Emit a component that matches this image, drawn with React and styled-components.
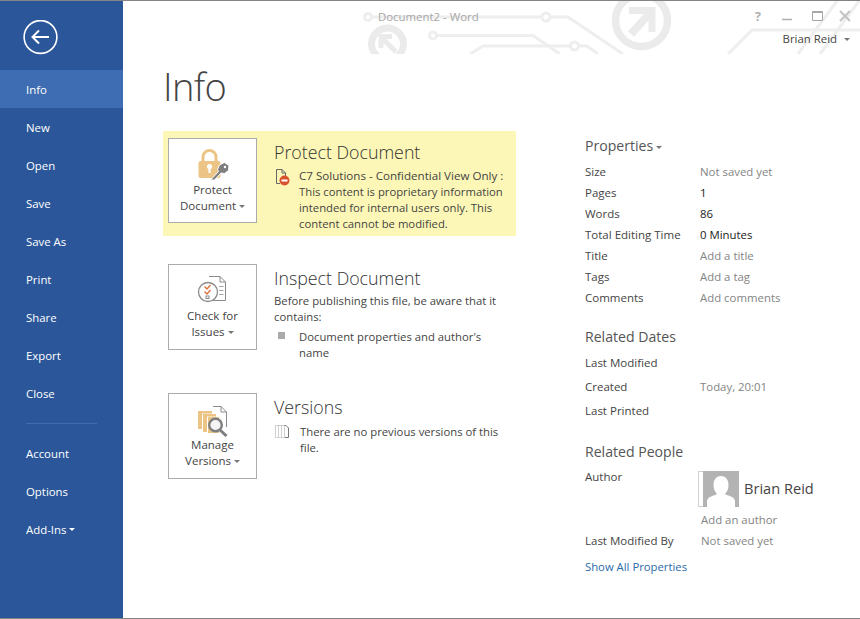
import React from "react";
import styled, { createGlobalStyle } from "styled-components";

const Global = createGlobalStyle`
  html, body { margin: 0; padding: 0; background: #fff; }
  body { font-family: "Open Sans", "Noto Sans", sans-serif; font-size: 11.6px; color: #444; }
  #root { width: 860px; height: 619px; overflow: hidden; }
`;

const Frame = styled.div`
  display: flex;
  width: 860px;
  height: 619px;
  box-sizing: border-box;
  border-top: 1px solid #848484;
  border-bottom: 1px solid #848484;
  background: #fff;
`;

const Sidebar = styled.nav`
  width: 123px;
  flex: none;
  background: #2b579a;
  color: #fff;
  display: flex;
  flex-direction: column;
`;

const BackWrap = styled.div`
  height: 69px;
  padding: 19px 0 0 23px;
  box-sizing: border-box;
`;

const NavItem = styled.div`
  height: 38px;
  display: flex;
  align-items: center;
  padding-left: 26px;
  background: ${(p) => (p.$active ? "#3e6db3" : "transparent")};
  font-size: 11.4px;
`;

const NavRule = styled.div`
  height: 1px;
  width: 71px;
  margin: 11px 0 10px 26px;
  background: #3e6db3;
`;

const Caret = styled.span`
  display: inline-block;
  width: 0;
  height: 0;
  margin-left: ${(p) => p.$gap || 3}px;
  vertical-align: 2px;
  border-left: 3px solid transparent;
  border-right: 3px solid transparent;
  border-top: 3px solid ${(p) => p.$color || "#777"};
`;

const Main = styled.main`
  flex: 1;
  position: relative;
  min-width: 0;
`;

const Deco = styled.svg`
  position: absolute;
  left: 0;
  top: 0;
`;

const TitleBar = styled.header`
  position: relative;
  height: 53px;
  display: flex;
  justify-content: space-between;
`;

const DocTitle = styled.div`
  margin: 8px 0 0 255px;
  color: #a6a6a6;
  font-size: 11.4px;
  line-height: 15px;
`;

const WinArea = styled.div`
  display: flex;
  flex-direction: column;
  align-items: flex-end;
  width: 110px;
`;

const WinControls = styled.svg`
  margin: 7px 8px 0 0;
`;

const UserName = styled.div`
  margin: 7px 10px 0 0;
  font-size: 11.4px;
  line-height: 16px;
  color: #444;
`;

const PageTitle = styled.h1`
  margin: 9px 0 0 40px;
  font-family: "Open Sans", sans-serif;
  font-weight: 300;
  font-size: 38px;
  line-height: 46px;
  color: #444;
  letter-spacing: -0.6px;
`;

const Columns = styled.div`
  display: flex;
  margin-top: 22px;
`;

const LeftCol = styled.div`
  width: 353px;
  margin-left: 40px;
  flex: none;
  display: flex;
  flex-direction: column;
`;

const Section = styled.section`
  display: flex;
  padding: ${(p) => p.$pad || "0 5px"};
  margin-bottom: ${(p) => p.$mb || 0}px;
  background: ${(p) => (p.$warn ? "#fcf7b6" : "transparent")};
`;

const ActionButton = styled.div`
  width: 89px;
  height: ${(p) => p.$h || 86}px;
  flex: none;
  box-sizing: border-box;
  border: 1px solid #ababab;
  background: #fff;
  display: flex;
  flex-direction: column;
  align-items: center;
  text-align: center;
  line-height: 16px;
  font-size: 11.5px;
  color: #444;
`;

const IconSlot = styled.div`
  height: 43px;
  padding-top: ${(p) => p.$top || 9}px;
  box-sizing: border-box;
  flex: none;
`;

const SectionBody = styled.div`
  margin-left: 17px;
  min-width: 0;
  flex: 1;
`;

const SectionTitle = styled.h2`
  margin: 0;
  font-weight: 300;
  font-size: 17.8px;
  line-height: 28px;
  color: #333;
`;

const BodyText = styled.div`
  line-height: 16px;
  color: #444;
  font-size: 11.3px;
  margin-top: 1px;
`;

const IconRow = styled.div`
  display: flex;
  line-height: 16px;
  font-size: 11.3px;
  margin-top: ${(p) => p.$mt || 0}px;
`;

const NoticeLead = styled.span`
  font-size: 11.6px;
`;

const RowIcon = styled.div`
  width: ${(p) => p.$w || 25}px;
  flex: none;
  box-sizing: border-box;
`;

const Square = styled.div`
  width: 7px;
  height: 7px;
  margin: 3px 0 0 4px;
  background: #ababab;
`;

const RightCol = styled.aside`
  margin-left: 69px;
  padding-top: 5px;
  width: 240px;
  flex: none;
  font-size: 11.5px;
`;

const GroupTitle = styled.h3`
  margin: ${(p) => p.$mt || 0}px 0 ${(p) => p.$mb || 0}px;
  font-weight: 400;
  font-size: 14.1px;
  line-height: 20px;
  color: #555;
`;

const PropGrid = styled.div`
  display: grid;
  grid-template-columns: 115px 1fr;
  grid-auto-rows: ${(p) => p.$row || 21}px;
  align-items: center;
`;

const Label = styled.div`
  color: #444;
  white-space: nowrap;
`;

const Val = styled.div`
  white-space: nowrap;
  font-size: 11.4px;
  color: ${(p) => (p.$strong ? "#222" : "#848484")};
`;

const AuthorRow = styled.div`
  display: flex;
  margin-top: 7px;
`;

const AuthorLabel = styled(Label)`
  width: 113px;
  flex: none;
  line-height: 16px;
`;

const Person = styled.div`
  display: flex;
  align-items: center;
  margin-top: 2px;
`;

const PersonName = styled.div`
  margin: 0 0 2px 5px;
  font-size: 14.6px;
  color: #444;
  white-space: nowrap;
`;

const AddAuthor = styled(Val)`
  margin: 5px 0 0 116px;
  line-height: 16px;
`;

const ModRow = styled.div`
  display: flex;
  margin-top: 5px;
  line-height: 16px;
`;

const ModLabel = styled(Label)`
  width: 116px;
  flex: none;
`;

const ShowAll = styled.div`
  margin-top: 10px;
  line-height: 16px;
  font-size: 11.3px;
  color: #2b6aa8;
`;

function BackIcon() {
  return (
    <svg width="36" height="36" viewBox="0 0 36 36">
      <circle cx="17.5" cy="17" r="16.4" fill="none" stroke="#fff" strokeWidth="1.6" />
      <path d="M9.5 17H26M16 10.5L9.5 17l6.5 6.5" fill="none" stroke="#fff" strokeWidth="2" />
    </svg>
  );
}

function Decoration() {
  return (
    <Deco width="737" height="53" viewBox="123 0 737 53" aria-hidden="true">
      <g fill="none" stroke="#eeeeee" strokeWidth="3">
        <path d="M372 16H541M551 16H568L623 53" />
        <circle cx="368" cy="16" r="3.500" />
        <circle cx="546" cy="16" r="4" />
        <path d="M437 34.500H533L560 53" />
        <circle cx="433" cy="34.500" r="3.500" />
        <path d="M470 53L483 45H570M579 45H587L598 53" />
        <circle cx="574.500" cy="45" r="4" />
        <path d="M728 53L752 29H860M798 53L840 -4M820 53L862 -4" />
      </g>
      <g fill="none" stroke="#ebebeb">
        <circle cx="641.500" cy="19.500" r="26" strokeWidth="7.500" />
        <circle cx="387.500" cy="43" r="16" strokeWidth="7" />
        <path d="M631 33L650 12" strokeWidth="8" />
        <path d="M629 9.500H652V31" strokeWidth="7" />
        <path d="M396 51L383 38" strokeWidth="5" />
        <path d="M392 35.500H381V47" strokeWidth="5" />
      </g>
    </Deco>
  );
}

function LockIcon() {
  return (
    <svg width="34" height="33" viewBox="0 0 34 33">
      <path d="M7 13V8a6.500 6.500 0 0 1 13 0v5" fill="none" stroke="#ecc586" strokeWidth="3" />
      <rect x="2.500" y="12" width="22" height="17" rx="2" fill="#ecc586" />
      <circle cx="13.500" cy="17.500" r="2.600" fill="#fff" />
      <rect x="12.400" y="18" width="2.200" height="6" fill="#fff" />
      <path d="M14.500 31l8-8.500 -1-2 2-4.500 5-2.500 4.500 3-.5 5-4 3-3.500-.5-6.500 7z" fill="#7f7f7f" stroke="#fff" strokeWidth="1" />
      <circle cx="29" cy="18" r="1.200" fill="#fff" />
    </svg>
  );
}

function CheckIssuesIcon() {
  return (
    <svg width="33" height="28" viewBox="0 0 33 28">
      <path d="M13 1.500H24L29.500 7V25.500H17" fill="none" stroke="#8a8a8a" />
      <path d="M24 1.500V7H29.500" fill="none" stroke="#8a8a8a" />
      <path d="M23 11.500h4.500M23 15.500h4.500M23 19.500h4.500" stroke="#a6a6a6" />
      <circle cx="12" cy="17" r="9.500" fill="#fff" stroke="#8a8a8a" strokeWidth="1.300" />
      <path d="M8.500 11.500l2.500 2.500 3.500-4M8.500 16.500l2.500 2.500 3.500-4" fill="none" stroke="#e0703d" strokeWidth="1.400" />
      <rect x="10" y="21" width="3" height="2.500" fill="none" stroke="#8a8a8a" />
    </svg>
  );
}

function VersionsIcon() {
  return (
    <svg width="32" height="32" viewBox="0 0 32 32">
      <path d="M16 1.500H24L29.500 7V22" fill="none" stroke="#8a8a8a" />
      <path d="M24 1.500V7H29.500" fill="none" stroke="#8a8a8a" />
      <rect x="1" y="6" width="14" height="18" fill="#ecc586" />
      <rect x="5" y="8.500" width="14" height="18" fill="#fff" />
      <rect x="6" y="9" width="13" height="18" fill="#ecc586" />
      <rect x="10" y="11.500" width="12" height="16" fill="#fff" />
      <rect x="11" y="12" width="11" height="16" fill="#ecc586" />
      <circle cx="18.500" cy="20" r="6.300" fill="#f4f4f4" stroke="#7f7f7f" strokeWidth="2.400" />
      <path d="M23 25L29.500 31" stroke="#7f7f7f" strokeWidth="3" />
    </svg>
  );
}

function RestrictIcon() {
  return (
    <svg width="16" height="18" viewBox="0 0 16 18">
      <path d="M8 1.500H2.500V15.500H6M8 1.500L11.500 5V8M8 1.500V5H11.500" fill="none" stroke="#666" />
      <circle cx="10.500" cy="12.500" r="5" fill="#d9512c" />
      <rect x="7.500" y="11.500" width="6" height="2" fill="#fff" />
    </svg>
  );
}

function DottedDocIcon() {
  return (
    <svg width="16" height="15" viewBox="0 0 16 15">
      <path d="M1.500 1.500H10.500V13.500H1.500Z M4.500 1.500V13.500 M7.500 1.500V13.500" fill="none" stroke="#a0a0a0" strokeDasharray="1 1" />
      <path d="M10.500 1.500H12L14.500 4V13.500H11" fill="none" stroke="#777" />
    </svg>
  );
}

function Avatar() {
  return (
    <svg width="41" height="36" viewBox="0 0 41 36">
      <rect x="0.500" y="0.500" width="40" height="35" fill="#fff" stroke="#d0d0d0" />
      <rect x="5" y="0" width="36" height="36" fill="#b3b3b3" />
      <path d="M23 5c5 0 7.500 4 7.500 9 0 4-1.500 7-3.500 9 3 2 9 2 10 7v6H9v-6c1-5 7-5 10-7-2-2-3.500-5-3.500-9 0-5 2.500-9 7.500-9z" fill="#fff" />
    </svg>
  );
}

function WindowControls() {
  return (
    <WinControls width="100" height="16" viewBox="0 0 100 16">
      <text x="3" y="13" fontSize="12.500" fontWeight="700" fill="#b0b0b0" fontFamily="Open Sans, sans-serif">?</text>
      <path d="M30 11.500H40" stroke="#b0b0b0" strokeWidth="1.500" />
      <path d="M60.500 3.500H70.500V12.500H60.500Z M60.500 4.500H70.500" fill="none" stroke="#a6a6a6" />
      <path d="M88 3L98 13M98 3L88 13" stroke="#c4c4c4" strokeWidth="2.200" />
    </WinControls>
  );
}

const navTop = ["Info", "New", "Open", "Save", "Save As", "Print", "Share", "Export", "Close"];

const props = [
  ["Size", "Not saved yet", false],
  ["Pages", "1", true],
  ["Words", "86", true],
  ["Total Editing Time", "0 Minutes", true],
  ["Title", "Add a title", false],
  ["Tags", "Add a tag", false],
  ["Comments", "Add comments", false],
];

const dates = [
  ["Last Modified", ""],
  ["Created", "Today, 20:01"],
  ["Last Printed", ""],
];

export default function App() {
  return (
    <>
      <Global />
      <Frame>
        <Sidebar>
          <BackWrap><BackIcon /></BackWrap>
          {navTop.map((n, i) => (
            <NavItem key={n} $active={i === 0}>{n}</NavItem>
          ))}
          <NavRule />
          <NavItem>Account</NavItem>
          <NavItem>Options</NavItem>
          <NavItem>Add-Ins<Caret $color="#fff" /></NavItem>
        </Sidebar>
        <Main>
          <Decoration />
          <TitleBar>
            <DocTitle>Document2 - Word</DocTitle>
            <WinArea>
              <WindowControls />
              <UserName>Brian Reid<Caret $gap={7} /></UserName>
            </WinArea>
          </TitleBar>
          <PageTitle>Info</PageTitle>
          <Columns>
            <LeftCol>
              <Section $warn $pad="7px 5px 4px" $mb={28}>
                <ActionButton $h={85}>
                  <IconSlot $top={10}><LockIcon /></IconSlot>
                  <div>Protect</div>
                  <div>Document<Caret /></div>
                </ActionButton>
                <SectionBody>
                  <SectionTitle>Protect Document</SectionTitle>
                  <IconRow $mt={2}>
                    <RowIcon><RestrictIcon /></RowIcon>
                    <div>
                      <NoticeLead>C7 Solutions - Confidential View Only :</NoticeLead><br />
                      This content is proprietary information<br />
                      intended for internal users only. This<br />
                      content cannot be modified.
                    </div>
                  </IconRow>
                </SectionBody>
              </Section>
              <Section $mb={32}>
                <ActionButton>
                  <IconSlot $top={10}><CheckIssuesIcon /></IconSlot>
                  <div>Check for</div>
                  <div>Issues<Caret /></div>
                </ActionButton>
                <SectionBody>
                  <SectionTitle>Inspect Document</SectionTitle>
                  <BodyText>
                    Before publishing this file, be aware that it<br />contains:
                  </BodyText>
                  <IconRow $mt={4}>
                    <RowIcon><Square /></RowIcon>
                    <div>Document properties and author's<br />name</div>
                  </IconRow>
                </SectionBody>
              </Section>
              <Section>
                <ActionButton>
                  <IconSlot $top={11}><VersionsIcon /></IconSlot>
                  <div>Manage</div>
                  <div>Versions<Caret /></div>
                </ActionButton>
                <SectionBody>
                  <SectionTitle>Versions</SectionTitle>
                  <IconRow $mt={3}>
                    <RowIcon $w={26}><DottedDocIcon /></RowIcon>
                    <div>There are no previous versions of this<br />file.</div>
                  </IconRow>
                </SectionBody>
              </Section>
            </LeftCol>
            <RightCol>
              <GroupTitle $mb={5}>Properties<Caret $gap={3} /></GroupTitle>
              <PropGrid>
                {props.map(([k, v, s]) => (
                  <React.Fragment key={k}>
                    <Label>{k}</Label>
                    <Val $strong={s}>{v}</Val>
                  </React.Fragment>
                ))}
              </PropGrid>
              <GroupTitle $mt={19} $mb={3}>Related Dates</GroupTitle>
              <PropGrid $row={24}>
                {dates.map(([k, v]) => (
                  <React.Fragment key={k}>
                    <Label>{k}</Label>
                    <Val>{v}</Val>
                  </React.Fragment>
                ))}
              </PropGrid>
              <GroupTitle $mt={20}>Related People</GroupTitle>
              <AuthorRow>
                <AuthorLabel>Author</AuthorLabel>
                <Person>
                  <Avatar />
                  <PersonName>Brian Reid</PersonName>
                </Person>
              </AuthorRow>
              <AddAuthor>Add an author</AddAuthor>
              <ModRow>
                <ModLabel>Last Modified By</ModLabel>
                <Val>Not saved yet</Val>
              </ModRow>
              <ShowAll>Show All Properties</ShowAll>
            </RightCol>
          </Columns>
        </Main>
      </Frame>
    </>
  );
}
